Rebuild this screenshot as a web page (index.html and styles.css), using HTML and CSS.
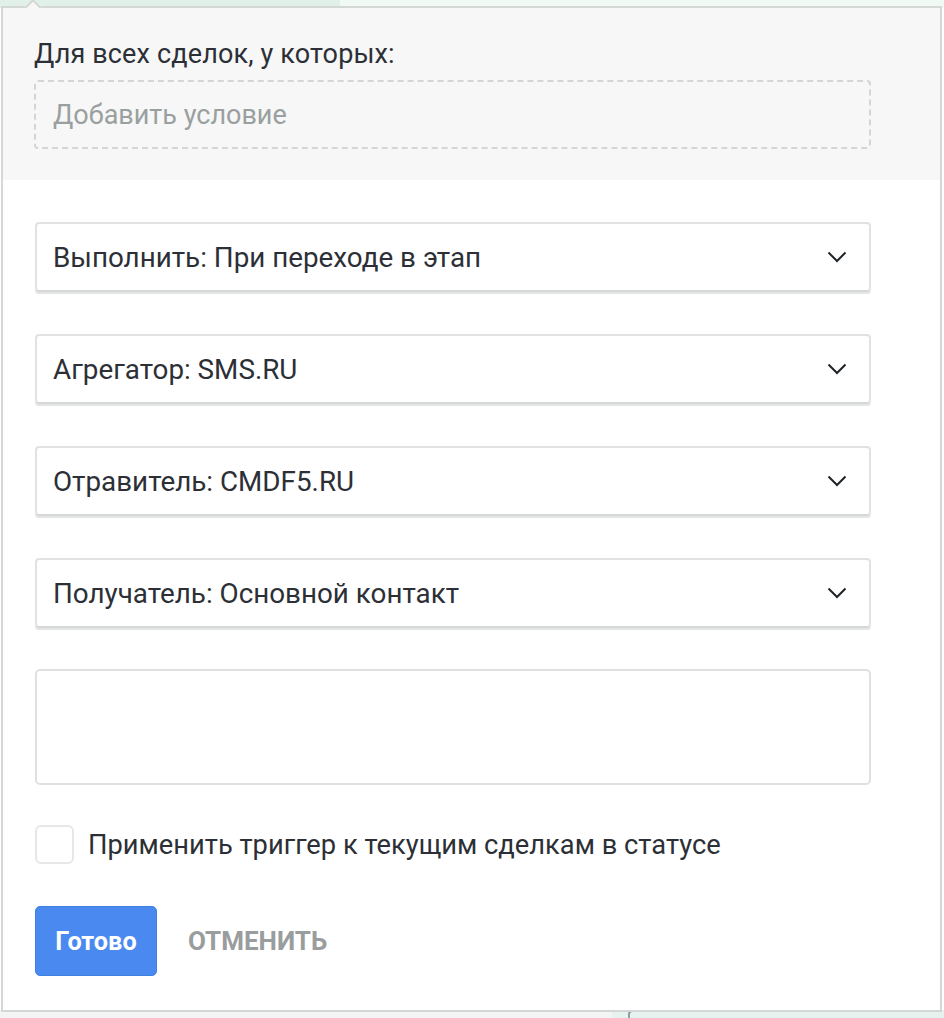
FILE: index.html
```html
<!DOCTYPE html>
<html lang="ru">
<head>
<meta charset="utf-8">
<title>Триггер</title>
<link rel="stylesheet" href="styles.css">
</head>
<body>
<div class="page">
  <div class="page-top"><span class="page-top-left"></span><span class="page-top-right"></span></div>
  <div class="page-mid"></div>
  <div class="page-bottom"><span class="page-bottom-left"></span><span class="page-bottom-right"><span class="bracket"></span></span></div>
</div>

<div class="popup">
  <span class="arrow"></span>
  <div class="conditions">
    <div class="cond-title">Для всех сделок, у которых:</div>
    <div class="add-cond">Добавить условие</div>
  </div>
  <div class="form">
    <div class="select">
      <span class="select-text">Выполнить: При переходе в этап</span>
      <svg class="chevron" width="20" height="12" viewBox="0 0 20 12"><path d="M1.5 1.5 L10 10 L18.5 1.5" fill="none" stroke="#1f2327" stroke-width="2"/></svg>
    </div>
    <div class="select">
      <span class="select-text">Агрегатор: SMS.RU</span>
      <svg class="chevron" width="20" height="12" viewBox="0 0 20 12"><path d="M1.5 1.5 L10 10 L18.5 1.5" fill="none" stroke="#1f2327" stroke-width="2"/></svg>
    </div>
    <div class="select">
      <span class="select-text">Отравитель: CMDF5.RU</span>
      <svg class="chevron" width="20" height="12" viewBox="0 0 20 12"><path d="M1.5 1.5 L10 10 L18.5 1.5" fill="none" stroke="#1f2327" stroke-width="2"/></svg>
    </div>
    <div class="select">
      <span class="select-text">Получатель: Основной контакт</span>
      <svg class="chevron" width="20" height="12" viewBox="0 0 20 12"><path d="M1.5 1.5 L10 10 L18.5 1.5" fill="none" stroke="#1f2327" stroke-width="2"/></svg>
    </div>
    <div class="textarea"></div>
    <label class="check">
      <span class="check-box"></span>
      <span class="check-label">Применить триггер к текущим сделкам в статусе</span>
    </label>
    <div class="actions">
      <button class="btn-primary">Готово</button>
      <button class="btn-cancel">ОТМЕНИТЬ</button>
    </div>
  </div>
</div>
</body>
</html>
```

FILE: styles.css
```css
* { box-sizing: border-box; }

html, body {
  margin: 0;
  padding: 0;
}

body {
  width: 944px;
  height: 1018px;
  overflow: hidden;
  background: #ffffff;
  font-family: Roboto, "Noto Sans", sans-serif;
  position: relative;
}

.page {
  height: 1018px;
  display: grid;
  grid-template-rows: 8px 1fr 8px;
}

.page-top {
  display: flex;
}
.page-top-left {
  width: 340px;
  background: #e2f0ea;
}
.page-top-right {
  flex: 1;
  background: #f1f9f4;
}

.page-mid {
  background: #ffffff;
}

.page-bottom {
  display: flex;
}
.page-bottom-left {
  width: 612px;
  background: #f3f4f4;
}
.page-bottom-right {
  flex: 1;
  background: #e6f2ed;
  padding-left: 16px;
}
.bracket {
  display: block;
  width: 6px;
  height: 8px;
  border-left: 2px solid #8aa0a8;
  border-top: 2px solid #8aa0a8;
  border-top-left-radius: 4px;
}

.popup {
  position: absolute;
  left: 1px;
  top: 6px;
  width: 941px;
  height: 1006px;
  border: 2px solid #d3d7d6;
  background: #ffffff;
  display: flex;
  flex-direction: column;
}

.arrow {
  position: absolute;
  left: 20px;
  top: -5px;
  width: 20px;
  height: 20px;
  background: #f7f7f7;
  border-top: 2px solid #d3d7d6;
  border-left: 2px solid #d3d7d6;
  transform: rotate(45deg);
}

.conditions {
  position: relative;
  background: #f7f7f7;
  padding: 29px 69px 31px 31px;
  height: 172px;
}

.cond-title {
  font-size: 27px;
  line-height: 34px;
  letter-spacing: 0.15px;
  color: #2c3036;
  margin-bottom: 9px;
}

.add-cond {
  height: 69px;
  border: 2px dashed #d4d6d6;
  border-radius: 4px;
  padding-left: 17px;
  display: flex;
  align-items: center;
  font-size: 27px;
  color: #9aa0a0;
}

.form {
  flex: 1;
  padding: 42px 69px 0 32px;
  display: flex;
  flex-direction: column;
  gap: 42px;
}

.select {
  height: 70px;
  border: 2px solid #e1e3e3;
  border-bottom-color: #d6d8d8;
  border-radius: 4px;
  box-shadow: 0 2px 0 #e4e5e5;
  padding: 0 22px 0 16px;
  display: flex;
  align-items: center;
  justify-content: space-between;
}

.select-text {
  font-size: 27.8px;
  color: #2c3036;
}

.chevron {
  display: block;
  flex: none;
}

.textarea {
  height: 116px;
  border: 2px solid #dfe1e1;
  border-radius: 5px;
  margin-top: -1px;
}

.check {
  display: flex;
  align-items: center;
  gap: 14px;
  margin-top: -2px;
}

.check-box {
  width: 39px;
  height: 39px;
  border: 2px solid #e6e7e7;
  border-radius: 6px;
  background: #ffffff;
  flex: none;
}

.check-label {
  font-size: 27.3px;
  color: #2c3036;
}

.actions {
  display: flex;
  align-items: center;
  gap: 31px;
}

.btn-primary {
  width: 122px;
  height: 70px;
  border: 1px solid #3f7fe0;
  border-radius: 5px;
  background: #4a8af0;
  color: #ffffff;
  font-family: Roboto, "Noto Sans", sans-serif;
  font-weight: 700;
  font-size: 25.3px;
  padding: 0;
}

.btn-cancel {
  border: 0;
  background: none;
  padding: 0;
  color: #9a9d9d;
  font-family: Roboto, "Noto Sans", sans-serif;
  font-weight: 700;
  font-size: 26px;
}
```
